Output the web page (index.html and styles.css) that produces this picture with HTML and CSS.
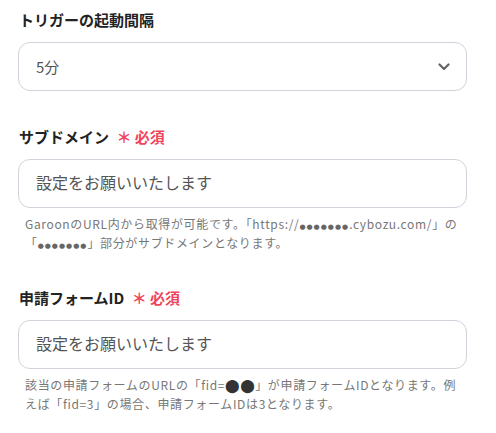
FILE: index.html
```html
<!DOCTYPE html>
<html lang="ja">
<head>
    <meta charset="UTF-8">
    <meta name="viewport" content="width=device-width, initial-scale=1.0">
    <title>Garoon 設定</title>
    <link rel="stylesheet" href="styles.css">
</head>
<body>
    <div class="form">
        <div class="field">
            <div class="label">トリガーの起動間隔</div>
            <div class="select-box">
                <span class="value">5分</span>
                <svg class="chevron" width="12" height="8" viewBox="0 0 12 8">
                    <path d="M1.5 1.5 L6 6 L10.5 1.5" fill="none" stroke="#666" stroke-width="2.2" stroke-linecap="round" stroke-linejoin="round"/>
                </svg>
            </div>
        </div>

        <div class="field">
            <div class="label">サブドメイン <span class="required">＊ 必須</span></div>
            <div class="input-box">設定をお願いいたします</div>
            <p class="help">GaroonのURL内から取得が可能です。「https://<span class="bullets">●●●●●●●</span>.cybozu.com/」の「<span class="bullets">●●●●●●●</span>」部分がサブドメインとなります。</p>
        </div>

        <div class="field">
            <div class="label">申請フォームID <span class="required">＊ 必須</span></div>
            <div class="input-box">設定をお願いいたします</div>
            <p class="help">該当の申請フォームのURLの「fid=<span class="dot">⬤⬤</span>」が申請フォームIDとなります。例えば「fid=3」の場合、申請フォームIDは3となります。</p>
        </div>
    </div>
</body>
</html>
```

FILE: styles.css
```css
/* General Styles */
body {
    font-family: "Noto Sans CJK JP", "Noto Sans", sans-serif;
    background-color: #ffffff;
    color: #222222;
    margin: 0;
    padding: 9px 29px 0 18px;
}

/* Field blocks */
.field {
    margin-bottom: 35px;
}

.label {
    font-size: 15px;
    font-weight: bold;
    line-height: 22px;
    margin-bottom: 11px;
    padding-left: 1px;
}

.required {
    color: #f0445c;
    margin-left: 4px;
}

/* Select and inputs */
.select-box,
.input-box {
    height: 47px;
    border: 1px solid #cfd3da;
    border-radius: 12px;
    padding: 0 16px 0 17px;
    display: flex;
    align-items: center;
    color: #555555;
}

.select-box {
    justify-content: space-between;
    font-size: 15px;
}

.input-box {
    font-size: 16px;
    padding-bottom: 3px;
    height: 44px;
}

.chevron {
    display: block;
}

/* Help text */
.help {
    margin: 6px 6px 0 7px;
    font-size: 12px;
    line-height: 19px;
    letter-spacing: 0.65px;
    color: #777777;
}

.bullets {
    font-family: "DejaVu Sans", sans-serif;
    font-size: 7px;
    line-height: 1;
    letter-spacing: 1px;
    color: #666666;
}

.dot {
    font-family: "DejaVu Sans", sans-serif;
    color: #333333;
    font-size: 13px;
    line-height: 1;
    letter-spacing: 0.5px;
}
```
